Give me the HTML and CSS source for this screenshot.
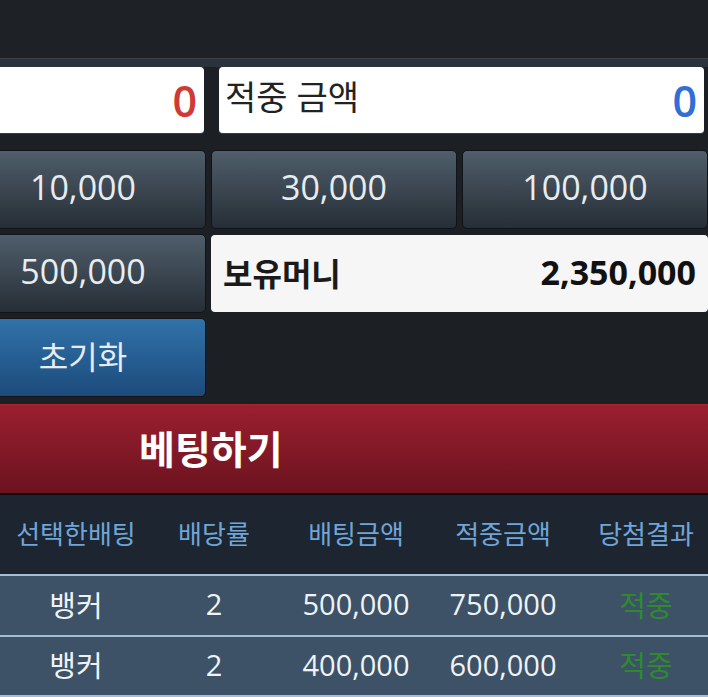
FILE: index.html
```html
<!DOCTYPE html>
<html lang="ko">
<head>
<meta charset="utf-8">
<title>베팅</title>
<link rel="stylesheet" href="styles.css">
</head>
<body>
<div class="topbar"></div>
<div class="panel">
  <div class="totals">
    <div class="total-box">
      <span class="total-value red">0</span>
    </div>
    <div class="total-box">
      <span class="total-label">적중 금액</span>
      <span class="total-value blue">0</span>
    </div>
  </div>
  <div class="chips">
    <button class="chip">10,000</button>
    <button class="chip">30,000</button>
    <button class="chip">100,000</button>
    <button class="chip">500,000</button>
    <div class="balance">
      <span class="balance-label">보유머니</span>
      <span class="balance-value">2,350,000</span>
    </div>
    <button class="chip reset">초기화</button>
  </div>
  <button class="bet-btn">베팅하기</button>
  <div class="history">
    <div class="hist-row hist-head">
      <span>선택한배팅</span><span>배당률</span><span>배팅금액</span><span>적중금액</span><span>당첨결과</span>
    </div>
    <div class="hist-row hist-item">
      <span>뱅커</span><span>2</span><span>500,000</span><span>750,000</span><span class="win">적중</span>
    </div>
    <div class="hist-row hist-item">
      <span>뱅커</span><span>2</span><span>400,000</span><span>600,000</span><span class="win">적중</span>
    </div>
  </div>
</div>
</body>
</html>
```
FILE: styles.css
```css
* { box-sizing: border-box; }
html, body {
  margin: 0;
  padding: 0;
  width: 708px;
  height: 697px;
  overflow: hidden;
  background: #1d2126;
  font-family: "Open Sans", "Noto Sans CJK KR", sans-serif;
}
.topbar {
  height: 58px;
  background: #1e2226;
}
.panel {
  border-top: 1px solid #3a4148;
  background: linear-gradient(#2a323b 0, #2a323b 8px, #1c2025 8px);
  padding-top: 8px;
}
.totals {
  display: grid;
  grid-template-columns: 485px 485px;
  column-gap: 15px;
  margin-left: -281px;
  height: 67px;
}
.total-box {
  background: #ffffff;
  border-radius: 4px;
  border-bottom: 1px solid #2b3a55;
  display: flex;
  align-items: center;
  justify-content: space-between;
  padding: 0 7px 0 6px;
}
.total-box:first-child {
  justify-content: flex-end;
}
.total-label {
  font-size: 34px;
  line-height: 1;
  color: #222;
  padding-bottom: 6px;
}
.total-value {
  font-size: 43px;
  font-weight: 600;
  line-height: 1;
}
.red { color: #d03a36; }
.blue { color: #2f6fd6; }
.chips {
  display: grid;
  grid-template-columns: 246px 246px 246px;
  grid-auto-rows: 79px;
  gap: 5px;
  margin-top: 16px;
  margin-left: -40px;
}
.chip {
  border: 1px solid #101418;
  border-radius: 5px;
  background: linear-gradient(#4f5e6b, #262e36);
  color: #e8ecef;
  font-family: inherit;
  font-size: 34px;
  font-weight: 400;
  padding: 0 0 5px 0;
  margin: 0;
}
.reset {
  background: linear-gradient(#3072aa, #1c4b7b);
  font-size: 32px;
}
.balance {
  grid-column: 2 / 4;
  margin: 1px 0;
  background: #f6f6f7;
  border-radius: 4px;
  display: flex;
  align-items: center;
  justify-content: space-between;
  padding: 0 12px 3px 12px;
}
.balance-label {
  font-size: 32px;
  font-weight: 700;
  color: #1a1a1a;
}
.balance-value {
  font-size: 34px;
  font-weight: 700;
  color: #111;
}
.bet-btn {
  display: block;
  width: 100%;
  height: 91px;
  margin-top: 7px;
  border: 0;
  border-top: 1px solid #a8262f;
  border-bottom: 2px solid #0d0a0b;
  background: linear-gradient(#9a1f2f, #6c131f);
  color: #ffffff;
  font-family: inherit;
  font-size: 39px;
  font-weight: 700;
  text-align: left;
  padding: 0 0 4px 139px;
}
.history {
  background: #1d2630;
}
.hist-row {
  display: grid;
  grid-template-columns: 140px 136px 148px 146px 140px;
  padding-left: 6px;
  text-align: center;
  align-items: center;
}
.hist-head {
  height: 79px;
  color: #6fa5d9;
  font-size: 26px;
  padding-bottom: 4px;
}
.hist-item {
  height: 61px;
  border-top: 2px solid #a6bed4;
  background: #3d5266;
  color: #f0f3f6;
  font-size: 29px;
  padding-bottom: 4px;
}
.hist-item:last-child {
  height: 62px;
  border-bottom: 2px solid #a6bed4;
}
.win { color: #2f8a2e; }
```
